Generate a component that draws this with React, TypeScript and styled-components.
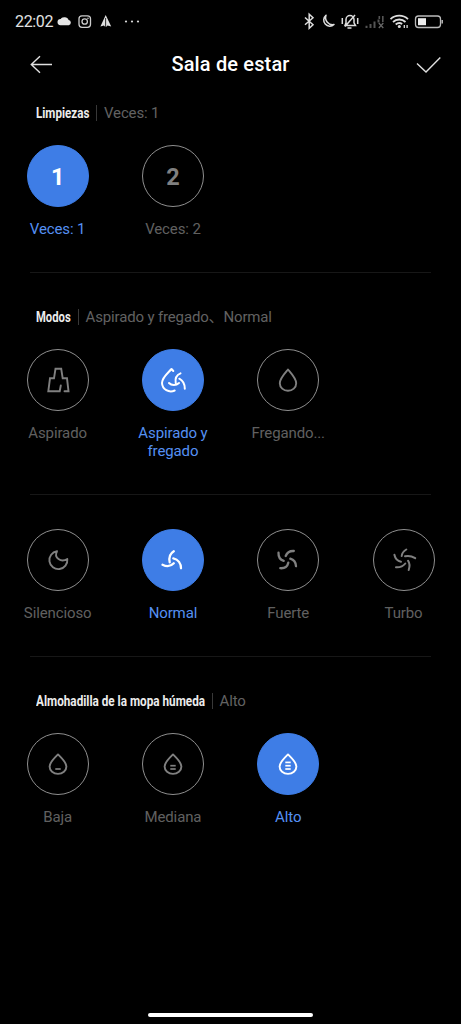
import React from 'react';
import styled, { createGlobalStyle } from 'styled-components';

const GlobalStyle = createGlobalStyle`
  * { box-sizing: border-box; }
  html, body { margin: 0; background: #000; }
  body { font-family: Roboto, "Noto Sans CJK SC", sans-serif; color: #fff; }
`;

const Screen = styled.main`
  width: 461px;
  height: 1024px;
  background: #000;
  display: flex;
  flex-direction: column;
  overflow: hidden;
`;

const StatusBar = styled.header`
  height: 41px;
  display: flex;
  align-items: center;
  justify-content: space-between;
  padding: 0 18px 0 15px;
  color: #e2e2e2;
`;

const Clock = styled.span`
  font-size: 16px;
  line-height: 20px;
  width: 42px;
  letter-spacing: -0.35px;
  padding-top: 2px;
  white-space: nowrap;
`;

const StatusGroup = styled.div`
  display: flex;
  align-items: center;
`;

const NavBar = styled.nav`
  height: 45px;
  display: grid;
  grid-template-columns: 60px 1fr 60px;
  align-items: center;
  padding: 0 20px 0 28px;
`;

const NavTitle = styled.h1`
  margin: 0;
  font-size: 20px;
  line-height: 24px;
  font-weight: 500;
  letter-spacing: 0.15px;
  text-align: center;
  padding-right: 8px;
`;

const IconButton = styled.button<{ $end?: boolean }>`
  border: 0;
  padding: 0;
  background: none;
  color: #e0e0e0;
  display: flex;
  justify-content: ${(p) => (p.$end ? 'flex-end' : 'flex-start')};
`;

const Section = styled.section<{ $first?: boolean }>`
  padding-top: ${(p) => (p.$first ? 17 : 34)}px;
`;

const SectionHeader = styled.div`
  height: 20px;
  display: flex;
  align-items: center;
  margin: 0 0 22px 36px;
`;

const TitleBox = styled.h2<{ $width: number }>`
  width: ${(p) => p.$width}px;
  margin: 0;
  font-size: 15.5px;
  line-height: 20px;
  font-weight: 700;
  color: #ececec;
  white-space: nowrap;
`;

const Condensed = styled.span<{ $scale: number }>`
  display: inline-block;
  transform: scaleX(${(p) => p.$scale});
  transform-origin: left center;
`;

const Summary = styled.span`
  height: 16px;
  margin-left: 7px;
  padding-left: 7px;
  border-left: 1px solid #383838;
  font-size: 15px;
  line-height: 17px;
  letter-spacing: -0.15px;
  color: #626262;
  white-space: nowrap;
`;

const Options = styled.div`
  display: grid;
  grid-template-columns: repeat(4, 115.3px);
`;

const Option = styled.div<{ $active?: boolean }>`
  display: flex;
  flex-direction: column;
  align-items: center;
  color: ${(p) => (p.$active ? '#5590f3' : '#606060')};
`;

const Circle = styled.div<{ $active?: boolean }>`
  width: 62px;
  height: 62px;
  border-radius: 50%;
  display: flex;
  align-items: center;
  justify-content: center;
  border: 1px solid ${(p) => (p.$active ? '#3e7de6' : '#8f8f8f')};
  background: ${(p) => (p.$active ? '#3e7de6' : 'transparent')};
  color: ${(p) => (p.$active ? '#fff' : '#808080')};
`;

const Count = styled.span`
  font-size: 23.5px;
  line-height: 28px;
  font-weight: 700;
  padding-top: 2px;
`;

const Label = styled.span`
  width: 90px;
  margin-top: 14px;
  font-size: 15px;
  line-height: 17.5px;
  letter-spacing: -0.12px;
  text-align: center;
`;

const Divider = styled.hr`
  height: 1px;
  border: 0;
  margin: 33.5px 30px 0;
  background: #171717;
`;

const HomeIndicator = styled.div`
  width: 165px;
  height: 4px;
  border-radius: 2px;
  background: #fff;
  margin: auto auto 7px 148px;
`;

const NotificationIcons = () => (
  <svg width="86" height="20" viewBox="57 10 86 20" fill="none">
    <path d="M60.500 24.200a3.100 3.100 0 0 1 .2-6.200A4.600 4.600 0 0 1 68.600 19a2.650 2.650 0 0 1 .2 5.200z" fill="#e6e6e6" />
    <rect x="79" y="14.800" width="11.500" height="11.500" rx="3" stroke="#ccc" strokeWidth="1.300" />
    <circle cx="84.700" cy="20.500" r="2.700" stroke="#ccc" strokeWidth="1.300" />
    <circle cx="88" cy="17.300" r=".8" fill="#ccc" />
    <path d="M105.700 14 111.200 25.500l-3.700-1-1.400 1.500V17h-.8v9l-1.400-1.500-3.500 1z" fill="#e0e0e0" />
    <g fill="#d8d8d8">
      <circle cx="126" cy="20.500" r="1.100" />
      <circle cx="132" cy="20.500" r="1.100" />
      <circle cx="138" cy="20.500" r="1.100" />
    </g>
  </svg>
);

const SystemIcons = () => (
  <svg width="141" height="20" viewBox="302 10 141 20" fill="none" stroke="#ddd" strokeWidth="1.500">
    <path d="m305 16.500 8 7.200-3.800 3.500V13.300l3.800 3.500-8 7" />
    <path d="M326 14.300a6.100 6.100 0 1 0 8 9.200 7 7 0 0 1-8-9.200z" strokeLinejoin="round" />
    <path d="M345 24.500h10.500l-1.500-2.700v-3.300a4 4 0 0 0-8 0v3.300zM347.500 27h4M345 25.500l10-11.500M342.300 17v6M357.700 17v6" />
    <path
      d="M365.500 24.700h2v2.300h-2zM369.500 23h2v4h-2zM373.500 20.500h2v6.500h-2zM377.500 18.500h2v3h-2zM382 15h1.600v6h-1.600zM378.500 15h1.600v3h-1.600z"
      fill="#555"
      stroke="none"
    />
    <path d="m378.800 22 4.500 5m0-5-4.500 5" stroke="#666" strokeWidth="1.300" />
    <path d="M390.500 18.200a12.700 12.700 0 0 1 17.500 0M393 21a9 9 0 0 1 12.500 0M395.700 23.500a5.400 5.400 0 0 1 6.500-.5" strokeWidth="1.800" />
    <circle cx="399.300" cy="25.600" r="1.500" fill="#ddd" stroke="none" />
    <path d="M404.300 24v3m2.800-3v3" strokeWidth="1.300" />
    <rect x="415.500" y="15" width="25" height="11.500" rx="3" stroke="#bbb" strokeWidth="1.300" />
    <path d="M418 17.200h8v7h-8z" fill="#eee" stroke="none" />
    <path d="M442.200 19v3.500" stroke="#bbb" strokeWidth="1.500" />
  </svg>
);

const Glyph = ({ children }: { children: React.ReactNode }) => (
  <svg
    width="28"
    height="28"
    viewBox="-14 -14 28 28"
    fill="none"
    stroke="currentColor"
    strokeWidth="1.900"
    strokeLinecap="round"
    strokeLinejoin="round"
  >
    {children}
  </svg>
);

const VacuumIcon = () => (
  <Glyph>
    <path d="M6.500 11.200H10.500L9-1.700H4.700L3.200-11.200H-2.500L-4-1.700H-8L-9.700 11.200H1.700L2.800 5.500" strokeLinejoin="miter" />
  </Glyph>
);

const VacuumMopIcon = () => (
  <Glyph>
    <path d="M.3-9-1.500-11C-5-7-11-2.500-11 3A8.800 8.800 0 0 0 1.700 10.500" strokeWidth="2" />
    <path d="M7.500-6.700C3.500-5 2-1.500 2.700 2.700M-4 3C-1.500 5.700 3 5.800 6 3M6.300-1.300C10 .7 11.800 4.300 11.800 8.700" strokeWidth="2" />
  </Glyph>
);

const DropIcon = ({ bars = 0 }: { bars?: number }) => (
  <Glyph>
    {bars === 0 ? (
      <path d="M0-10.500C-1.800-8.300-8.200-1.700-8.200 3.200A8.200 7.600 0 0 0 8.200 3.200C8.200-1.700 1.800-8.300 0-10.500z" />
    ) : (
      <path d="M0-9.600C-2.200-7.400-8.400-1.800-8.400 2.500A8.400 7.400 0 0 0 8.400 2.500C8.400-1.800 2.200-7.400 0-9.600z" />
    )}
    {Array.from({ length: bars }, (_, i) => (
      <path key={i} d={`M-2.700 ${5 - i * 3.3}H2.700`} strokeWidth="1.700" strokeLinecap="butt" />
    ))}
  </Glyph>
);

const MoonIcon = () => (
  <Glyph>
    <path d="M-1-8.800A9 9 0 1 0 9.300-1C3 2.800-4.500-2-1-8.800z" />
  </Glyph>
);

const FAN_BLADES = {
  normal: 'M.8-8.700C-3.300-6.300-4.200-2.200-3.300 2.300M-10.500 4.800C-6.500 6.800-2 6.300.8 3.300M.3-1.700C5.200-.7 8 3.500 8 8.300',
  strong:
    'M5.800-9C1.800-9.200-1-7.500-2.300-4M-9.500-7.300C-9.700-3.300-7.800-.3-4.300.8M-7.700 8.200C-3.500 8.500-.5 6.300.3 2.700M2.300-1.300C5.700-.3 7.800 2.300 8 6.200',
  turbo:
    'M2.300-10.500C-.3-9-2-7-2.300-4M1-3.700C4.500-4.700 8-3.800 11.200-1.800M4 .7C6 3.500 5.900 6.500 4.700 10M1.300 3.500C-1 6.500-4.500 7.500-8 7.300M-3 1.700C-6.500 1-8.800-1.500-9.600-5.300',
};

const FanIcon = ({ level }: { level: keyof typeof FAN_BLADES }) => (
  <Glyph>
    <path d={FAN_BLADES[level]} strokeWidth={level === 'turbo' ? 2 : 2.3} />
  </Glyph>
);

interface Item {
  label: string;
  icon: React.ReactNode;
  active?: boolean;
}

const OptionRow = ({ items }: { items: Item[] }) => (
  <Options>
    {items.map((item) => (
      <Option key={item.label} $active={item.active}>
        <Circle $active={item.active}>{item.icon}</Circle>
        <Label>{item.label}</Label>
      </Option>
    ))}
  </Options>
);

const Heading = ({ title, width, scale, value }: { title: string; width: number; scale: number; value: string }) => (
  <SectionHeader>
    <TitleBox $width={width}>
      <Condensed $scale={scale}>{title}</Condensed>
    </TitleBox>
    <Summary>{value}</Summary>
  </SectionHeader>
);

export default function App() {
  return (
    <Screen>
      <GlobalStyle />
      <StatusBar>
        <StatusGroup>
          <Clock>22:02</Clock>
          <NotificationIcons />
        </StatusGroup>
        <SystemIcons />
      </StatusBar>
      <NavBar>
        <IconButton aria-label="Atrás">
          <svg width="26" height="22" viewBox="28 52 26 22" fill="none" stroke="currentColor" strokeWidth="1.400">
            <path d="M40 55.300 31.300 63.500 40 71.700M31.500 63.500H52" />
          </svg>
        </IconButton>
        <NavTitle>Sala de estar</NavTitle>
        <IconButton $end aria-label="Guardar">
          <svg width="26" height="22" viewBox="415 52 26 22" fill="none" stroke="currentColor" strokeWidth="1.400">
            <path d="m417 62.500 9 8.500 14.300-14.500" />
          </svg>
        </IconButton>
      </NavBar>

      <Section $first>
        <Heading title="Limpiezas" width={53} scale={0.75} value="Veces: 1" />
        <OptionRow
          items={[
            { label: 'Veces: 1', icon: <Count>1</Count>, active: true },
            { label: 'Veces: 2', icon: <Count>2</Count> },
          ]}
        />
      </Section>
      <Divider />
      <Section>
        <Heading title="Modos" width={34.5} scale={0.727} value="Aspirado y fregado、Normal" />
        <OptionRow
          items={[
            { label: 'Aspirado', icon: <VacuumIcon /> },
            { label: 'Aspirado y fregado', icon: <VacuumMopIcon />, active: true },
            { label: 'Fregando...', icon: <DropIcon /> },
          ]}
        />
      </Section>
      <Divider />
      <Section>
        <OptionRow
          items={[
            { label: 'Silencioso', icon: <MoonIcon /> },
            { label: 'Normal', icon: <FanIcon level="normal" />, active: true },
            { label: 'Fuerte', icon: <FanIcon level="strong" /> },
            { label: 'Turbo', icon: <FanIcon level="turbo" /> },
          ]}
        />
      </Section>
      <Divider />
      <Section>
        <Heading title="Almohadilla de la mopa húmeda" width={168.5} scale={0.757} value="Alto" />
        <OptionRow
          items={[
            { label: 'Baja', icon: <DropIcon bars={1} /> },
            { label: 'Mediana', icon: <DropIcon bars={2} /> },
            { label: 'Alto', icon: <DropIcon bars={3} />, active: true },
          ]}
        />
      </Section>
      <HomeIndicator />
    </Screen>
  );
}
